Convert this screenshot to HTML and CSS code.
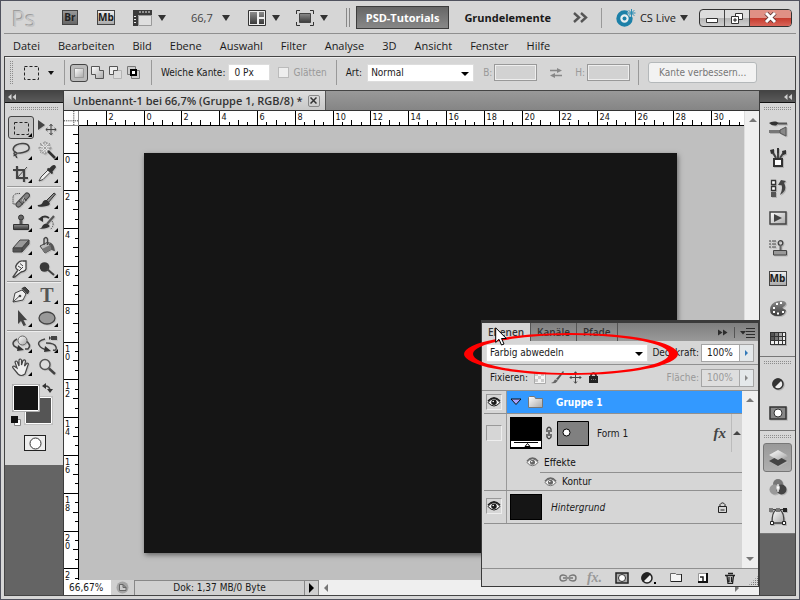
FILE: index.html
```html
<!DOCTYPE html>
<html lang="de">

  <head>
    <meta charset="UTF-8">
    <meta name="viewport" content="width=device-width, initial-scale=1.0">
    <title>Unbenannt-1 bei 66,7%</title>

    <link rel="stylesheet" href="styles.css">
  </head>

  <body>

    <svg class="defs" aria-hidden="true">
      <defs>
        <linearGradient id="steel" x1="0" y1="0" x2="0" y2="1">
          <stop offset="0" stop-color="#8c8c8c" />
          <stop offset="1" stop-color="#3a3a3a" />
        </linearGradient>
        <linearGradient id="pale" x1="0" y1="0" x2="1" y2="1">
          <stop offset="0" stop-color="#ffffff" />
          <stop offset="1" stop-color="#a8a8a8" />
        </linearGradient>
        <symbol id="eye" viewBox="0 0 14 10">
          <path d="M1 5.5Q4 1.5 7 1.5T13 5.5Q10 9 7 9T1 5.5Z" fill="#f4f4f4" stroke="currentColor" />
          <path d="M1 4Q4 .7 7 .7T13 4" fill="none" stroke="currentColor" stroke-width="1.4" />
          <circle cx="7" cy="5.3" r="2.7" fill="currentColor" />
          <circle cx="6.2" cy="4.5" r=".8" fill="#fff" />
        </symbol>
        <symbol id="collapse" viewBox="0 0 8 6">
          <path d="M3.5 0V6L0 3ZM8 0V6L4.5 3Z" fill="#d0d0d0" />
        </symbol>
      </defs>
    </svg>

    <div class="window">

      <header class="app-bar">
        <span class="logo">Ps</span>
        <button type="button" class="square-button bridge">Br</button>
        <button type="button" class="square-button mini">Mb</button>
        <button type="button" class="icon-button extras" aria-label="Extras anzeigen">
          <svg width="19" height="16" viewBox="0 0 19 16">
            <path d="M0 0H19V5H5V16H0Z" fill="#3b3b3b" />
            <path d="M7 1V3M10 1V3M13 1V3M16 1V3M1 6.5H3M1 9.5H3M1 12.5H3" stroke="#e8e8e8" />
            <path d="M5.5 5.5H18.5V15.5H5.5Z" fill="#dedede" stroke="#999" />
          </svg>
          <span class="arrow"></span>
        </button>
        <button type="button" class="icon-button zoom-level">66,7 <span class="arrow"></span></button>
        <button type="button" class="icon-button arrange" aria-label="Dokumente anordnen">
          <svg width="18" height="16" viewBox="0 0 18 16">
            <path d="M.5 .5H17.5V15.5H.5Z" fill="#eee" stroke="#333" />
            <path d="M2 2H9V14H2ZM11 2H16V7H11ZM11 9H16V14H11Z" fill="url(#steel)" />
          </svg>
          <span class="arrow"></span>
        </button>
        <button type="button" class="icon-button screen" aria-label="Bildschirmmodus">
          <svg width="18" height="16" viewBox="0 0 18 16">
            <path d="M.5 4V.5H4M14 .5H17.5V4M17.5 12V15.5H14M4 15.5H.5V12" fill="none" stroke="#333" />
            <path d="M3.5 3.5H14.5V12.5H3.5Z" fill="url(#steel)" stroke="#444" />
          </svg>
          <span class="arrow"></span>
        </button>
        <span class="double-line"></span>
        <button type="button" class="space active">PSD-Tutorials</button>
        <button type="button" class="space">Grundelemente</button>
        <button type="button" class="icon-button more" aria-label="Weitere Arbeitsbereiche">
          <svg width="15" height="11" viewBox="0 0 15 11">
            <path d="M1 1L6 5.5L1 10M8 1L13 5.5L8 10" fill="none" stroke="#555" stroke-width="2.4" />
          </svg>
        </button>
        <span class="line"></span>
        <button type="button" class="icon-button live">
          <svg width="20" height="18" viewBox="0 0 20 18">
            <circle cx="8.5" cy="9.5" r="6.2" fill="#e8eef0" stroke="#1c80a8" stroke-width="4" />
            <circle cx="8.5" cy="9.5" r="2" fill="#1c80a8" />
            <path d="M15.5 0V8M11.5 4H19.5M12.7 1.2L18.3 6.8M18.3 1.2L12.7 6.8" stroke="#d6d6d6" stroke-width="2.5" />
            <path d="M15.5 0V8M11.5 4H19.5M12.7 1.2L18.3 6.8M18.3 1.2L12.7 6.8" stroke="#2a8bb2" />
          </svg>
          CS Live <span class="arrow"></span>
        </button>
        <div class="window-buttons">
          <button type="button" aria-label="Minimieren">
            <svg width="12" height="13" viewBox="0 0 12 13"><path d="M.5 7.5H11.5V11.5H.5Z" fill="#fff" stroke="#333" /></svg>
          </button>
          <button type="button" aria-label="Verkleinern">
            <svg width="12" height="12" viewBox="0 0 12 12">
              <path d="M4.5 1.5H11.5V7.5H4.5Z" fill="#fff" stroke="#333" />
              <path d="M.5 4.5H7.5V11.5H.5Z" fill="#fff" stroke="#333" />
              <path d="M3 7H5V9H3Z" fill="#aaa" stroke="#333" />
            </svg>
          </button>
          <button type="button" class="close" aria-label="Schließen">
            <svg width="13" height="11" viewBox="0 0 13 11">
              <path d="M2 1L11 10M11 1L2 10" stroke="#5a3030" stroke-width="4.5" />
              <path d="M2 1L11 10M11 1L2 10" stroke="#fff" stroke-width="3" />
            </svg>
          </button>
        </div>
      </header>

      <nav class="menu">
        <a href="#">Datei</a>
        <a href="#">Bearbeiten</a>
        <a href="#">Bild</a>
        <a href="#">Ebene</a>
        <a href="#">Auswahl</a>
        <a href="#">Filter</a>
        <a href="#">Analyse</a>
        <a href="#">3D</a>
        <a href="#">Ansicht</a>
        <a href="#">Fenster</a>
        <a href="#">Hilfe</a>
      </nav>

      <div class="frame">

        <form class="options">
          <span class="grip-v"></span>
          <button type="button" class="icon-button current-tool" aria-label="Auswahlrechteck">
            <svg width="15" height="14" viewBox="0 0 15 14">
              <path d="M.5 .5H14.5V13.5H.5Z" fill="none" stroke="#222" stroke-dasharray="3 2" />
            </svg>
            <span class="arrow small"></span>
          </button>
          <span class="line"></span>
          <div class="modes">
            <button type="button" class="mode selected" aria-label="Neue Auswahl">
              <svg width="14" height="14" viewBox="0 0 14 14"><path d="M2.5 2.5H11.5V11.5H2.5Z" fill="url(#pale)" stroke="#999" /></svg>
            </button>
            <button type="button" class="mode" aria-label="Hinzufügen">
              <svg width="14" height="14" viewBox="0 0 14 14"><path d="M.5 .5H8.5V4.5H12.5V12.5H4.5V8.5H.5Z" fill="url(#pale)" stroke="#555" /></svg>
            </button>
            <button type="button" class="mode" aria-label="Subtrahieren">
              <svg width="14" height="14" viewBox="0 0 14 14">
                <path d="M4.5 4.5H12.5V12.5H4.5Z" fill="#ddd" stroke="#b4b4b4" />
                <path d="M.5 .5H8.5V4.5H4.5V8.5H.5Z" fill="#eee" stroke="#555" />
              </svg>
            </button>
            <button type="button" class="mode" aria-label="Schnittmenge">
              <svg width="14" height="14" viewBox="0 0 14 14">
                <path d="M.5 .5H8.5V8.5H.5ZM4.5 4.5H12.5V12.5H4.5Z" fill="#ccc" stroke="#777" />
                <path d="M4 4H9V9H4Z" fill="#fff" stroke="#000" stroke-width="2" />
              </svg>
            </button>
          </div>
          <span class="line"></span>
          <label for="feather">Weiche Kante:</label>
          <input type="text" class="field feather" id="feather" value="0 Px">
          <label class="check off"><input type="checkbox" disabled> Glätten</label>
          <span class="line"></span>
          <label for="style">Art:</label>
          <div class="select style-select">
            <select id="style">
              <option>Normal</option>
            </select>
          </div>
          <label for="width" class="off">B:</label>
          <input type="text" class="field size" id="width" disabled>
          <button type="button" class="icon-button swap" aria-label="Tauschen" disabled>
            <svg width="12" height="10" viewBox="0 0 12 10">
              <path d="M0 2.5H8M4 7.5H12" stroke="#888" stroke-width="1.5" />
              <path d="M7 0L12 2.5L7 5ZM5 5L0 7.5L5 10Z" fill="#888" />
            </svg>
          </button>
          <label for="height" class="off">H:</label>
          <input type="text" class="field size" id="height" disabled>
          <span class="line"></span>
          <button type="button" class="refine" disabled>Kante verbessern...</button>
        </form>

        <main class="workspace">

          <aside class="toolbox">
            <div class="dock-head"><svg width="8" height="6"><use href="#collapse" /></svg></div>
            <div class="tool-panel">
              <span class="grip"></span>
              <div class="tools">
                <button type="button" class="tool has-more selected" aria-label="Auswahlrechteck">
                  <svg width="20" height="20" viewBox="0 0 20 20"><path d="M3.5 4.5H17.5V16.5H3.5Z" fill="none" stroke="#222" stroke-dasharray="3 2" /></svg>
                </button>
                <button type="button" class="tool" aria-label="Verschieben">
                  <svg width="20" height="20" viewBox="0 0 20 20">
                    <path d="M1 2V12L8 7Z" fill="#444" />
                    <path d="M14 6.5V16.5M9 11.5H19M12.5 8L14 6.2L15.5 8M12.5 15L14 16.8L15.5 15M10.5 10L8.8 11.5L10.5 13M17.5 10L19.2 11.5L17.5 13" fill="none" stroke="#444" />
                  </svg>
                </button>
                <button type="button" class="tool has-more" aria-label="Lasso">
                  <svg width="20" height="20" viewBox="0 0 20 20">
                    <path d="M4 11Q1 9 3 6T11 2.5T18 6T12 11.5T4 11Q2 12.5 4 14T5.5 17M4 11Q7 12 5 13.5T2.5 14.5" fill="none" stroke="#444" stroke-width="1.5" />
                  </svg>
                </button>
                <button type="button" class="tool has-more" aria-label="Zauberstab">
                  <svg width="20" height="20" viewBox="0 0 20 20">
                    <circle cx="8" cy="7" r="5" fill="#e4e4e4" stroke="#999" stroke-width="2" stroke-dasharray="1.5 1.5" />
                    <path d="M8 0V14M1 7H15M3 2L13 12M13 2L3 12" stroke="#999" stroke-dasharray="2 1" />
                    <path d="M11 10L18 17" stroke="#333" stroke-width="2.5" />
                  </svg>
                </button>
                <button type="button" class="tool has-more" aria-label="Freistellen">
                  <svg width="20" height="20" viewBox="0 0 20 20">
                    <path d="M6 2V14H17M2 6H13V18" fill="none" stroke="#444" stroke-width="2.2" />
                    <path d="M6 14L16 3" stroke="#444" />
                  </svg>
                </button>
                <button type="button" class="tool has-more" aria-label="Pipette">
                  <svg width="20" height="20" viewBox="0 0 20 20">
                    <path d="M2 17L4 13L11 6L13 8.500L6 15.500Z" fill="#eee" stroke="#444" />
                    <path d="M10.5 4.5L15.5 9.500M12 6L15.5 2.500Q17.5 1 18 3L14.5 7.500Z" fill="#333" stroke="#333" stroke-width="1.8" />
                  </svg>
                </button>
              </div>
              <div class="tools">
                <button type="button" class="tool has-more" aria-label="Bereichsreparatur">
                  <svg width="20" height="20" viewBox="0 0 20 20">
                    <path d="M9 3.5Q2 3 2 8V14H5" fill="none" stroke="#222" stroke-dasharray="1 1" />
                    <path d="M7.500 14.500L16 5.500" stroke="#444" stroke-width="6" stroke-linecap="round" />
                    <path d="M7.500 14.500L16 5.500" stroke="#808080" stroke-width="4" stroke-linecap="round" />
                    <path d="M8 11L12 14.500M12 7L15.500 10.500" stroke="#444" />
                    <path d="M11 10H12M12 8H13M13 11H14" stroke="#eee" />
                  </svg>
                </button>
                <button type="button" class="tool has-more" aria-label="Pinsel">
                  <svg width="20" height="20" viewBox="0 0 20 20">
                    <path d="M9 11L17 3L18.5 4L11 13Z" fill="#888" stroke="#333" />
                    <path d="M1 15Q5 15 6 11.5Q9 8.5 12 12T7 16.5T1 15Z" fill="#333" />
                  </svg>
                </button>
                <button type="button" class="tool has-more" aria-label="Kopierstempel">
                  <svg width="20" height="20" viewBox="0 0 20 20">
                    <circle cx="10" cy="4.500" r="2.500" fill="#666" stroke="#333" />
                    <path d="M8.5 7H11.5V11H8.5Z" fill="#555" />
                    <path d="M2.5 11.5H17.5V16.5H2.5Z" fill="url(#steel)" stroke="#333" />
                  </svg>
                </button>
                <button type="button" class="tool has-more" aria-label="Protokollpinsel">
                  <svg width="20" height="20" viewBox="0 0 20 20">
                    <path d="M4 5Q8 2 12 5" fill="none" stroke="#333" stroke-width="1.800" />
                    <path d="M1 6L6 3V9Z" fill="#333" />
                    <path d="M10 11L17 3" stroke="#555" stroke-width="2.2" />
                    <path d="M2 16Q5 15 6 12Q9 9 12 12T2 16Z" fill="#333" />
                    <path d="M15 8Q18 12 13 17" fill="none" stroke="#444" stroke-dasharray="1.5 1" />
                  </svg>
                </button>
                <button type="button" class="tool has-more" aria-label="Radiergummi">
                  <svg width="20" height="20" viewBox="0 0 20 20">
                    <path d="M2 12L9 4H18L11 12Z" fill="#999" stroke="#444" />
                    <path d="M2 12H11V16H2ZM11 12L18 4V8L11 16Z" fill="#555" stroke="#444" />
                  </svg>
                </button>
                <button type="button" class="tool has-more" aria-label="Füllwerkzeug">
                  <svg width="20" height="20" viewBox="0 0 20 20">
                    <path d="M3 10L11 6L15 13L8 17Z" fill="#bbb" stroke="#444" />
                    <path d="M5 13L13 9L15 13L8 17Z" fill="#777" />
                    <path d="M7 9V3Q9 0 10.5 3V9" fill="none" stroke="#444" stroke-width="1.4" />
                    <path d="M12 6Q17 7 18 15Q14 15 14 11Z" fill="#555" />
                  </svg>
                </button>
                <button type="button" class="tool has-more" aria-label="Wischfinger">
                  <svg width="20" height="20" viewBox="0 0 20 20">
                    <path d="M2 18L7 11Q3 9 6 5T12 2H15V8Q16 12 10 13L5 17Q3 19 2 18Z" fill="#eee" stroke="#444" stroke-width="1.3" />
                    <path d="M7 7L10 9M9 4.5L12 7M8 12L12 8" stroke="#444" />
                  </svg>
                </button>
                <button type="button" class="tool has-more" aria-label="Abwedler">
                  <svg width="20" height="20" viewBox="0 0 20 20">
                    <circle cx="7.500" cy="8" r="4.800" fill="#3a3a3a" />
                    <path d="M10 10L17 16" stroke="#444" stroke-width="2" />
                  </svg>
                </button>
              </div>
              <div class="tools">
                <button type="button" class="tool has-more" aria-label="Zeichenstift">
                  <svg width="20" height="20" viewBox="0 0 20 20">
                    <path d="M2 17L4 8L11 5L15 9L12 15Z" fill="#eee" stroke="#444" />
                    <path d="M2 17L9 10.5" stroke="#444" />
                    <circle cx="9" cy="11" r="1.3" fill="#444" />
                    <path d="M11 3.5L16.5 9L18 6L14 2Z" fill="#444" stroke="#333" />
                  </svg>
                </button>
                <button type="button" class="tool has-more type" aria-label="Text">T</button>
                <button type="button" class="tool has-more" aria-label="Pfadauswahl">
                  <svg width="20" height="20" viewBox="0 0 20 20"><path d="M7 2V16L10 13L12.5 18L15 17L12.5 12H16Z" fill="#444" /></svg>
                </button>
                <button type="button" class="tool has-more" aria-label="Ellipse">
                  <svg width="20" height="20" viewBox="0 0 20 20"><ellipse cx="10" cy="10" rx="8" ry="6" fill="#999" stroke="#444" stroke-width="1.3" /></svg>
                </button>
              </div>
              <div class="tools">
                <button type="button" class="tool has-more" aria-label="3D-Objekt drehen">
                  <svg width="20" height="20" viewBox="0 0 20 20">
                    <path d="M6 5Q0 8 3 12L8 15M15 7Q21 11 17 15L14 15" fill="none" stroke="#444" stroke-width="1.6" />
                    <path d="M7 11L13 16L6 17Z" fill="#333" />
                    <circle cx="11.5" cy="6.5" r="4.5" fill="url(#pale)" stroke="#666" />
                  </svg>
                </button>
                <button type="button" class="tool has-more" aria-label="3D-Kamera drehen">
                  <svg width="20" height="20" viewBox="0 0 20 20">
                    <path d="M8 5Q0 7 2 11T11 16M9 9Q18 9 19 13T16 16" fill="none" stroke="#444" stroke-width="1.4" />
                    <path d="M8 12L14 17L7 18ZM12 2L14 4L12 6Z" fill="#333" />
                    <path d="M14 2H20V6H14Z" fill="#444" />
                  </svg>
                </button>
                <button type="button" class="tool has-more" aria-label="Hand">
                  <svg width="20" height="20" viewBox="0 0 20 20">
                    <path d="M7 17L2 11Q1 9 3 9L6 11L4 5Q5 3 6.5 5L8 9V3Q9 1 10.5 3V8L12 3.5Q14 2 14.5 4L13.5 9L16 6Q18 6 17 8L15 14L14 17Q10 20 7 17Z" fill="#eee" stroke="#444" stroke-width="1.2" />
                  </svg>
                </button>
                <button type="button" class="tool" aria-label="Zoom">
                  <svg width="20" height="20" viewBox="0 0 20 20">
                    <circle cx="8" cy="7.5" r="5" fill="#ddd" stroke="#555" stroke-width="1.5" />
                    <path d="M12 11.5L18 17" stroke="#444" stroke-width="2.4" />
                  </svg>
                </button>
              </div>
              <svg class="swatches" width="44" height="44" viewBox="0 0 44 44">
                <path d="M13.5 13.5H41.5V41.5H13.5Z" fill="#555" stroke="#c0c0c0" />
                <path d="M14.5 14.5H40.5V40.5H14.5Z" fill="#555" stroke="#fff" />
                <path d="M1.5 1.5H28.5V28.5H1.5Z" fill="#151515" stroke="#b0b0b0" />
                <path d="M2.5 2.5H27.5V27.5H2.5Z" fill="#151515" stroke="#fff" />
                <path d="M34 3Q39 3 39 8" fill="none" stroke="#444" stroke-width="1.5" />
                <path d="M35 0V6L31 3ZM36 6H42L39 10Z" fill="#333" />
                <path d="M3.5 36.5H9.5V42.5H3.5Z" fill="#fff" stroke="#888" />
                <path d="M0 33H7V40H0Z" fill="#111" />
              </svg>
              <button type="button" class="quick-mask" aria-label="Maskierungsmodus">
                <svg width="13" height="13" viewBox="0 0 13 13"><circle cx="6.5" cy="6.5" r="5.5" fill="#fff" stroke="#333" /></svg>
              </button>
            </div>
          </aside>

          <section class="document">
            <div class="tab-bar">
              <div class="doc-tab">
                Unbenannt-1 bei 66,7% (Gruppe 1, RGB/8) *
                <button type="button" aria-label="Dokument schließen">
                  <svg width="7" height="7" viewBox="0 0 7 7"><path d="M.5 .5L6.5 6.5M6.5 .5L.5 6.5" stroke="#333" stroke-width="1.5" /></svg>
                </button>
              </div>
            </div>
            <div class="view">
              <svg class="ruler-corner" viewBox="0 0 15 15">
                <path d="M10.5 0V15M0 10.5H15" stroke="#222" stroke-dasharray="1 1" />
              </svg>
              <svg class="ruler-h" id="ruler-h"></svg>
              <svg class="ruler-v" id="ruler-v"></svg>
              <div class="canvas"><div class="image"></div></div>
              <div class="scroll-v"><span class="up"></span></div>
            </div>
            <div class="status">
              <input type="text" class="status-zoom" value="66,67%" aria-label="Zoom">
              <button type="button" class="status-icon" aria-label="Version">
                <svg width="13" height="13" viewBox="0 0 13 13">
                  <circle cx="6.5" cy="6.5" r="6" fill="#a4a4a4" />
                  <path d="M3.5 9.5V3.5H7L10 6.5V9.5ZM7 3.5V6.5H10" fill="#ccc" stroke="#666" />
                </svg>
              </button>
              <span class="doc-size">Dok: 1,37 MB/0 Byte</span>
              <button type="button" class="status-more" aria-label="Statusanzeige"><span></span></button>
              <div class="scroll-h"><span class="left"></span><span class="right"></span></div>
            </div>
          </section>

          <aside class="dock">
            <div class="dock-head"><svg width="8" height="6"><use href="#collapse" /></svg></div>
            <div class="dock-group tall">
              <span class="grip"></span>
              <button type="button" aria-label="Pinsel">
                <svg width="20" height="20" viewBox="0 0 20 20">
                  <path d="M1 5Q3 3 8 3.5L11 5L8 7.5Q4 8 1 5Z" fill="#333" />
                  <path d="M10 5.5H19" stroke="#555" stroke-width="2" />
                  <path d="M1 13.5H12" stroke="#777" stroke-width="3" />
                  <path d="M12 12L18 9V18L12 15Z" fill="#888" stroke="#555" />
                </svg>
              </button>
              <button type="button" aria-label="Kopierquelle">
                <svg width="20" height="20" viewBox="0 0 20 20">
                  <path d="M8 10L4 3M10 10V2M12 10L16 4" stroke="#444" stroke-width="2" />
                  <path d="M2 2L6 1V5L3 6ZM14 3L18 2L18 6L15 7ZM9 0H11V5H9Z" fill="#333" />
                  <path d="M6 11H14V18H6Z" fill="#fff" stroke="#333" stroke-width="2" />
                </svg>
              </button>
              <button type="button" aria-label="Protokoll">
                <svg width="20" height="20" viewBox="0 0 20 20">
                  <path d="M3.5 2.5H7.5V6.5H3.5ZM3.5 8.5H7.5V12.5H3.5Z" fill="#fff" stroke="#333" stroke-width="1.3" />
                  <path d="M3 14H8V19H3Z" fill="#555" />
                  <path d="M10 7L13 2L18 3L16 5Q20 12 12 17Q15 11 13.500 7Z" fill="#444" />
                </svg>
              </button>
              <button type="button" aria-label="Aktionen">
                <svg width="20" height="20" viewBox="0 0 20 20">
                  <path d="M2 4H18V16H2Z" fill="url(#pale)" stroke="#444" stroke-width="1.5" />
                  <path d="M6 6V14L14 10Z" fill="#444" />
                </svg>
              </button>
              <button type="button" aria-label="Werkzeugvorgaben">
                <svg width="20" height="20" viewBox="0 0 20 20">
                  <path d="M1 3H3M4 3H8M1 6H3M4 6H8M1 9H3M4 9H8" stroke="#444" />
                  <circle cx="12.5" cy="5" r="2.3" fill="none" stroke="#444" stroke-width="1.3" />
                  <path d="M11.5 7H13.5V12H11.5Z" fill="#666" />
                  <path d="M5.5 12.5H18.5V17H5.5Z" fill="#999" stroke="#444" />
                </svg>
              </button>
              <button type="button" aria-label="Mini Bridge"><span class="square-button mini">Mb</span></button>
              <button type="button" aria-label="Farbe">
                <svg width="20" height="20" viewBox="0 0 20 20">
                  <path d="M2 12Q2 5 10 3Q18 2 18 6Q17 8 15 9T18 12Q17 18 10 18Q2 18 2 12Z" fill="url(#steel)" />
                  <path d="M5 10H7M8 6H10M12 5H14M5 14H7M9 15.5H11M14 14H16" stroke="#fff" stroke-width="2.2" />
                </svg>
              </button>
              <button type="button" aria-label="Farbfelder">
                <svg width="20" height="20" viewBox="0 0 20 20">
                  <path d="M2 4H18V17H2Z" fill="#333" />
                  <path d="M3 5H6V8H3ZM3 9H6V12H3Z" fill="#555" />
                  <path d="M7 5H10V8H7ZM7 9H10V12H7Z" fill="#777" />
                  <path d="M11 5H14V8H11ZM11 9H14V12H11Z" fill="#aaa" />
                  <path d="M15 5H17V8H15ZM15 9H17V12H15ZM3 13H6V16H3ZM7 13H10V16H7ZM11 13H14V16H11ZM15 13H17V16H15Z" fill="#eee" />
                </svg>
              </button>
            </div>
            <div class="dock-group">
              <span class="grip"></span>
              <button type="button" aria-label="Korrekturen">
                <svg width="20" height="20" viewBox="0 0 20 20">
                  <circle cx="10" cy="10" r="5" fill="#eee" stroke="#333" stroke-width="1.5" />
                  <path d="M6 14A5.5 5.5 0 0 1 14 6Z" fill="#333" />
                </svg>
              </button>
              <button type="button" aria-label="Masken">
                <svg width="20" height="20" viewBox="0 0 20 20">
                  <path d="M2 4H18V16H2Z" fill="#888" stroke="#333" stroke-width="1.5" />
                  <circle cx="10" cy="10" r="4" fill="#fff" stroke="#333" />
                </svg>
              </button>
            </div>
            <div class="dock-group">
              <span class="grip"></span>
              <button type="button" class="pressed" aria-label="Ebenen">
                <svg width="20" height="20" viewBox="0 0 20 20">
                  <path d="M1 13L10 8L19 13L10 18Z" fill="#444" />
                  <path d="M1 7L10 2L19 7L10 12Z" fill="url(#pale)" />
                </svg>
              </button>
              <button type="button" aria-label="Kanäle">
                <svg width="20" height="20" viewBox="0 0 20 20">
                  <circle cx="10" cy="7" r="5" fill="#777" />
                  <circle cx="6.5" cy="12.5" r="5" fill="#999" />
                  <circle cx="13.5" cy="12.5" r="5" fill="#444" />
                  <path d="M10 7Q13 10 10 15Q7 10 10 7Z" fill="#fff" stroke="#ccc" />
                </svg>
              </button>
              <button type="button" aria-label="Pfade">
                <svg width="20" height="20" viewBox="0 0 20 20">
                  <path d="M4 17Q4 6 8 4H12Q16 6 16 17Z" fill="url(#pale)" stroke="#444" stroke-width="1.3" />
                  <path d="M2 3.5H18" stroke="#444" />
                  <path d="M1 2H5V6H1ZM8 2H12V6H8Z" fill="#777" />
                  <path d="M15 2H19V6H15Z" fill="#222" />
                  <path d="M2.5 15.5H5.5V18.5H2.5ZM14.5 15.5H17.5V18.5H14.5Z" fill="#fff" stroke="#222" />
                </svg>
              </button>
            </div>
          </aside>

        </main>
      </div>

      <section class="layers">
        <div class="panel-tabs">
          <button type="button" class="panel-tab current">Ebenen</button>
          <button type="button" class="panel-tab">Kanäle</button>
          <button type="button" class="panel-tab">Pfade</button>
          <svg class="panel-icons" width="38" height="11" viewBox="0 0 38 11">
            <path d="M0 2.5V8.5L4.5 5.5ZM5 2.5V8.5L9.5 5.5Z" fill="#2c2c2c" />
            <path d="M16.5 0V11" stroke="#555" />
            <path d="M22 4H28L25 7.5Z" fill="#2c2c2c" />
            <path d="M28 1.5H37M28 4.5H37M28 7.5H37M28 10.5H37" stroke="#2c2c2c" />
          </svg>
        </div>
        <div class="panel-row">
          <div class="select blend">
            <select aria-label="Füllmethode">
              <option>Farbig abwedeln</option>
            </select>
          </div>
          <label for="opacity">Deckkraft:</label>
          <div class="percent">
            <input type="text" id="opacity" value="100%">
            <button type="button" aria-label="Deckkraft ändern"><span></span></button>
          </div>
        </div>
        <div class="panel-row lock-row">
          <span>Fixieren:</span>
          <svg class="locks" width="66" height="13" viewBox="0 0 66 13">
            <path d="M.5 1.5H11.5V12.5H.5Z" fill="#f4f4f4" stroke="#aaa" />
            <path d="M1 2H4V5H1ZM7 2H10V5H7ZM4 5H7V8H4ZM1 8H4V11H1ZM7 8H10V11H7Z" fill="#ccc" />
            <path d="M22 8L29 0L30 1L24 9Z" fill="#555" />
            <path d="M17 12Q20 11 21 8.5L24 9.5Q22 13 17 12Z" fill="#666" />
            <path d="M41.5 1V12M36 6.5H47M40 2.5L41.5 .7L43 2.5M40 10.5L41.5 12.3L43 10.5M37.5 5L36 6.5L37.5 8M45.5 5L47 6.5L45.5 8" fill="none" stroke="#444" />
            <path d="M57 6V4Q59.5 0 62 4V6" fill="none" stroke="#222" stroke-width="1.6" />
            <path d="M55 5H64V12H55Z" fill="#222" />
            <path d="M57 8.5H62" stroke="#777" stroke-dasharray="1 1" />
          </svg>
          <label for="fill" class="off">Fläche:</label>
          <div class="percent off">
            <input type="text" id="fill" value="100%" disabled>
            <button type="button" aria-label="Fläche ändern" disabled><span></span></button>
          </div>
        </div>
        <div class="layer-area">
          <ul class="layer-list">
            <li class="layer group">
              <div class="visibility"><button type="button" class="eye-box" aria-label="Sichtbarkeit"><svg width="14" height="10"><use href="#eye" /></svg></button></div>
              <div class="layer-body">
                <svg class="twirl" width="12" height="8" viewBox="0 0 12 8"><path d="M1 1H11L6 6.5Z" fill="#a9a4ff" stroke="#111" /></svg>
                <svg class="folder" width="16" height="12" viewBox="0 0 16 12"><path d="M.5 1.5L1.5 .5H6.5L7.5 2.5H14.5V11.5H.5Z" fill="url(#pale)" stroke="#777" /></svg>
                <span>Gruppe 1</span>
              </div>
            </li>
            <li class="layer shape">
              <div class="visibility"><button type="button" class="eye-box" aria-label="Sichtbarkeit"></button></div>
              <div class="layer-content">
                <div class="layer-body">
                  <svg class="thumb" width="32" height="32" viewBox="0 0 32 32">
                    <path d="M0 0H32V32H0Z" fill="#000" />
                    <path d="M1 24H31V30H1Z" fill="#fff" />
                    <path d="M4 25.5H28M15 29.5L17.5 26.5L20 29.5Z" fill="none" stroke="#000" />
                  </svg>
                  <svg class="chain" width="8" height="14" viewBox="0 0 8 14">
                    <path d="M2 6V3Q4 -.5 6 3V6M2 8V11Q4 14.5 6 11V8M4 4V10" fill="none" stroke="#444" stroke-width="1.4" />
                  </svg>
                  <svg class="mask" width="32" height="25" viewBox="0 0 32 25">
                    <path d="M.5 .5H31.5V24.5H.5Z" fill="#808080" stroke="#000" />
                    <circle cx="9.5" cy="11.5" r="3.5" fill="#fff" stroke="#000" />
                  </svg>
                  <span>Form 1</span>
                  <i class="fx">fx</i>
                  <button type="button" class="fold" aria-label="Effekte einklappen"><span></span></button>
                </div>
                <div class="effect"><svg width="13" height="10"><use href="#eye" /></svg> Effekte</div>
                <div class="effect sub"><svg width="13" height="10"><use href="#eye" /></svg> Kontur</div>
              </div>
            </li>
            <li class="layer background">
              <div class="visibility"><button type="button" class="eye-box" aria-label="Sichtbarkeit"><svg width="14" height="10"><use href="#eye" /></svg></button></div>
              <div class="layer-body">
                <span class="thumb-dark"></span>
                <em>Hintergrund</em>
                <svg class="lock" width="9" height="11" viewBox="0 0 9 11">
                  <path d="M2 5V2.5Q4.5 -.8 7 2.5V5M.5 4.5H8.5V10.5H.5ZM2.5 8H6.5" fill="none" stroke="#222" />
                </svg>
              </div>
            </li>
          </ul>
          <div class="layer-scroll"><span class="up"></span><span class="down"></span></div>
        </div>
        <div class="panel-foot">
          <button type="button" class="off" aria-label="Ebenen verbinden">
            <svg width="18" height="8" viewBox="0 0 18 8"><path d="M8 2.5Q6 1 4 1Q1 1 1 4T4 7Q6 7 8 5.5M10 2.5Q12 1 14 1Q17 1 17 4T14 7Q12 7 10 5.5M4 4H14" fill="none" stroke="#777" stroke-width="1.4" /></svg>
          </button>
          <button type="button" class="off" aria-label="Ebenenstil"><i class="fx">fx.</i></button>
          <button type="button" aria-label="Ebenenmaske">
            <svg width="14" height="12" viewBox="0 0 14 12"><path d="M1 1H13V11H1Z" fill="#aaa" stroke="#222" stroke-width="1.5" /><circle cx="7" cy="6" r="3.5" fill="#fff" stroke="#333" /></svg>
          </button>
          <button type="button" aria-label="Einstellungsebene">
            <svg width="16" height="12" viewBox="0 0 16 12"><circle cx="6" cy="6" r="5" fill="#eee" stroke="#222" stroke-width="1.5" /><path d="M2 10A5.5 5.5 0 0 1 10 2Z" fill="#222" /><path d="M13 10H15V12H13Z" fill="#000" /></svg>
          </button>
          <button type="button" aria-label="Neue Gruppe">
            <svg width="12" height="9" viewBox="0 0 12 9"><path d="M.5 .5H5.5L6.5 1.5H11.5V8.5H.5Z" fill="#f4f4f4" stroke="#666" /><path d="M11.5 1V8.5H1" fill="none" stroke="#222" /></svg>
          </button>
          <button type="button" aria-label="Neue Ebene">
            <svg width="10" height="10" viewBox="0 0 10 10"><path d="M.5 .5H9.5V9.500H.5Z" fill="#fff" stroke="#999" /><path d="M9 0V9H0" fill="none" stroke="#111" stroke-width="2" /><path d="M2 4H5V8" fill="none" stroke="#222" stroke-width="1.5" /></svg>
          </button>
          <button type="button" aria-label="Löschen">
            <svg width="10" height="12" viewBox="0 0 10 12"><path d="M2 4L3 11.5H7.5L8.5 4M4 5V10M6.5 5V10" fill="none" stroke="#222" stroke-width="1.3" /><path d="M0 3.5H10M3 1.5H8" stroke="#222" stroke-width="1.5" /></svg>
          </button>
          <span class="resize"></span>
        </div>
        <svg class="marker" viewBox="0 0 214 42">
          <path fill-rule="evenodd" d="M0 21A107 21 0 0 1 214 21A107 21 0 0 1 0 21ZM9 21A98 19 0 0 0 205 21A98 19 0 0 0 9 21Z" fill="#f00" />
        </svg>
        <svg class="cursor" width="12" height="19" viewBox="0 0 12 19">
          <path d="M.7 .8V15.5L4 12.3L6.5 18L9 17L6.5 11.5H11.3Z" fill="#fff" stroke="#000" />
        </svg>
      </section>

    </div>

    <script src="rulers.js"></script>
  </body>

</html>
```

FILE: styles.css
```css
* {
  margin: 0;
  padding: 0;
  box-sizing: border-box;
}

body {
  height: 100vh;
  overflow: hidden;
  font-family: "Open Sans", "Noto Sans", sans-serif;
  font-size: 11px;
  color: #1a1a1a;
}

button,
input,
select {
  font: inherit;
  color: inherit;
}

button {
  background: none;
  border: none;
}

svg {
  display: block;
  flex: none;
}

a {
  color: inherit;
  text-decoration: none;
}

.defs {
  position: absolute;
  width: 0;
  height: 0;
}

.window {
  position: relative;
  height: 100vh;
  display: flex;
  flex-direction: column;
  padding: 1px 3px 3px;
  border: 1px solid #50525e;
  background: #d6d6d6;
}

/* application bar */

.app-bar {
  display: flex;
  align-items: center;
  height: 32px;
  padding: 0 4px 0 8px;
  border-bottom: 1px solid #8f8f8f;
  white-space: nowrap;
}

.logo {
  width: 50px;
  font-size: 22px;
  line-height: 28px;
  color: #c6c6c6;
  text-shadow: -1px -1px 0 #9c9c9c;
}

.square-button {
  height: 15px;
  border: 1px solid #444;
  font-size: 10px;
  font-weight: bold;
  line-height: 13px;
  text-align: center;
}

.bridge {
  width: 16px;
  margin-right: 19px;
  background: linear-gradient(#999, #666);
  color: #222;
}

.mini {
  width: 18px;
  background: linear-gradient(#eee, #aaa);
}

.icon-button {
  display: flex;
  align-items: center;
  gap: 6px;
}

.arrow {
  border: 4px solid transparent;
  border-top: 6px solid #333;
  border-bottom: none;
}

.arrow.small {
  border-width: 4px 3px 0;
  border-top-color: #111;
}

.extras {
  margin-left: 18px;
}

.zoom-level {
  margin-left: 25px;
  gap: 9px;
  font-size: 11px;
  color: #444;
}

.arrange {
  margin-left: 18px;
}

.screen {
  margin-left: 16px;
}

.double-line {
  width: 4px;
  height: 19px;
  margin: 0 6px 0 18px;
  border: solid #888;
  border-width: 0 1px;
}

.line {
  width: 1px;
  background: #999;
}

.app-bar .line {
  height: 20px;
}

.space {
  height: 23px;
  padding: 0 9px;
  border: 1px solid transparent;
  font-weight: bold;
}

.space.active {
  margin-right: 5px;
  border-color: #3c3c3c;
  background: linear-gradient(#666, #888);
  color: #fff;
}

.more {
  margin: 0 13px 0 12px;
}

.live {
  margin-left: 14px;
  gap: 4px;
}

.window-buttons {
  flex: none;
  display: flex;
  height: 18px;
  margin-left: auto;
  border: 1px solid #333;
  border-radius: 4px;
  overflow: hidden;
  background: linear-gradient(#ddd 50%, #b4b4b4 50%, #d0d0d0);
}

.window-buttons button {
  width: 25px;
  display: grid;
  place-items: center;
  border-right: 1px solid #444;
}

.window-buttons .close {
  width: 41px;
  border: none;
  background: linear-gradient(#e09085 50%, #c53a2c 50%, #d9665a);
}

/* menu */

.menu {
  display: flex;
  align-items: center;
  gap: 18px;
  height: 22px;
  padding-left: 9px;
  white-space: nowrap;
}

.frame {
  flex: 1;
  min-height: 0;
  display: flex;
  flex-direction: column;
  border: 1px solid #444;
}

/* options bar */

.options {
  display: flex;
  align-items: center;
  height: 33px;
  padding: 0 4px 3px;
  border-top: 1px solid #eee;
  font-family: "DejaVu Sans Condensed", "DejaVu Sans", sans-serif;
  font-size: 10px;
  white-space: nowrap;
}

.options .line {
  height: 25px;
}

.off {
  color: #999;
}

.grip,
.grip-v {
  background:
    repeating-linear-gradient(90deg, #d6d6d6 0 1px, transparent 1px 2px),
    repeating-linear-gradient(#8c8c8c 0 1px, #d6d6d6 1px 2px);
}

.grip-v {
  width: 4px;
  height: 24px;
}

.current-tool {
  margin: 0 10px 0 11px;
  gap: 9px;
}

.modes {
  display: flex;
  gap: 2px;
  margin: 0 9px 0 5px;
}

.mode {
  width: 16px;
  height: 18px;
  display: grid;
  place-items: center;
}

.mode.selected {
  width: 18px;
  border: 1px solid #444;
  border-radius: 3px;
  background: #bbb;
}

.options label[for="feather"] {
  margin-left: 9px;
}

.field {
  height: 17px;
  border: 1px solid #ddd;
  background: #fff;
}

.field:disabled {
  border: 1px solid #999;
  outline: 1px solid #eee;
  outline-offset: -2px;
  background: #d2d2d2;
}

.feather {
  width: 42px;
  margin: 0 8px 0 3px;
  padding-left: 5px;
}

.check {
  display: flex;
  align-items: center;
  gap: 4px;
  margin-right: 9px;
}

.check input {
  appearance: none;
  width: 11px;
  height: 11px;
  border: 1px solid #bbb;
  background: #eee;
}

.options label[for="style"] {
  margin: 0 5px 0 9px;
}

.select {
  position: relative;
  height: 18px;
  border: 1px solid #ddd;
  background: #fff;
}

.select select {
  appearance: none;
  width: 100%;
  height: 16px;
  padding: 0 3px;
  border: none;
  background: transparent;
}

.select::after {
  content: "";
  position: absolute;
  right: 4px;
  top: 7px;
  border: 4px solid transparent;
  border-top-color: #000;
  border-bottom: none;
  pointer-events: none;
}

.style-select {
  width: 107px;
  margin-right: 9px;
}

.size {
  width: 43px;
  margin-left: 2px;
}

.swap {
  margin: 0 13px;
}

.size + .line {
  margin: 0 9px 0 8px;
}

.refine {
  width: 109px;
  height: 21px;
  border: 1px solid #b4b8ba;
  border-radius: 3px;
  background: #f2f2f2;
  color: #777;
}

/* workspace */

.workspace {
  flex: 1;
  min-height: 0;
  display: flex;
  border-top: 1px solid #444;
}

.toolbox {
  width: 59px;
  border-right: 1px solid #3c3c3c;
  background: #646464;
}

.dock-head {
  display: flex;
  align-items: center;
  height: 12px;
  padding: 0 3px;
  border-bottom: 1px solid #111;
  background: linear-gradient(#444, #5a5a5a);
}

.grip {
  display: block;
  height: 4px;
}

.tool-panel {
  height: 362px;
  padding: 4px 2px 0;
  background: #d6d6d6;
}

.tool-panel .grip {
  margin: 0 3px 5px;
}

.tools {
  display: grid;
  grid-template-columns: 26px 26px;
  grid-auto-rows: 23px;
  padding: 0 0 1px 1px;
}

.tools + .tools {
  padding-top: 1px;
  border-top: 1px solid #999;
  box-shadow: inset 0 1px #eee;
}

.tool {
  position: relative;
  display: grid;
  place-items: center;
  border: 1px solid transparent;
}

.tool svg {
  filter: drop-shadow(1px 1px 0 #c4c4c4);
}

.tool.selected {
  border: 1px solid #444;
  border-radius: 3px;
  background: #c4c4c4;
}

.tool.has-more::after {
  content: "";
  position: absolute;
  right: 1px;
  bottom: 1px;
  border: 2px solid #000;
  border-top-color: transparent;
  border-left-color: transparent;
}

.type {
  font-family: "Liberation Serif", serif;
  font-size: 20px;
  font-weight: bold;
  line-height: 20px;
  color: #555;
}

.swatches {
  margin: 4px 0 0 4px;
}

.quick-mask {
  display: grid;
  place-items: center;
  width: 22px;
  height: 16px;
  margin: 8px 0 0 17px;
  border: 1px solid #222;
  background: #eee;
}

/* document */

.document {
  flex: 1;
  min-width: 0;
  display: flex;
  flex-direction: column;
}

.tab-bar {
  display: flex;
  height: 20px;
  border-bottom: 1px solid #333;
  background: linear-gradient(#999, #858585);
}

.doc-tab {
  display: flex;
  align-items: center;
  gap: 5px;
  padding: 0 5px 0 9px;
  border-right: 1px solid #555;
  background: linear-gradient(#dedede, #c8c8c8);
  font-weight: 600;
  color: #333;
  white-space: nowrap;
}

.doc-tab button {
  display: grid;
  place-items: center;
  width: 12px;
  height: 12px;
  border: 1px solid #888;
  border-radius: 2px;
}

.view {
  flex: 1;
  min-height: 0;
  display: grid;
  grid-template-columns: 15px 1fr 15px;
  grid-template-rows: 15px 1fr;
}

.view > svg {
  width: 100%;
  height: 100%;
  overflow: hidden;
  background: #fff;
}

.view > .ruler-corner {
  border: solid #888;
  border-width: 0 1px 1px 0;
}

.view > .ruler-h {
  border-bottom: 1px solid #000;
}

.view > .ruler-v {
  grid-row: 2;
  grid-column: 1;
  min-height: 0;
  border-right: 1px solid #000;
}

.ruler-h text,
.ruler-v text {
  font-family: "DejaVu Sans Condensed", "DejaVu Sans", sans-serif;
  font-size: 9px;
  fill: #111;
}

.canvas {
  grid-row: 2;
  grid-column: 2;
  min-height: 0;
  padding: 27px 66px 27px 65px;
  background: #bfbfbf;
}

.image {
  max-height: 100%;
  aspect-ratio: 4 / 3;
  background: #151515;
  box-shadow: 1px 2px 5px #666;
}

.scroll-v {
  grid-row: 1 / 3;
  grid-column: 3;
  padding: 7px 4px;
  border-left: 1px solid #ddd;
  background: #efefef;
}

.up,
.down {
  display: block;
  border: 4px solid transparent;
}

.up {
  border-top: none;
  border-bottom-color: #777;
}

.down {
  border-bottom: none;
  border-top-color: #777;
}

.status {
  display: flex;
  height: 15px;
  background: #d0d0d0;
  font-family: "DejaVu Sans Condensed", "DejaVu Sans", sans-serif;
  font-size: 10px;
  white-space: nowrap;
}

.status-zoom {
  width: 47px;
  padding-left: 5px;
  border: none;
  background: #fff;
}

.status-icon {
  padding: 1px 5px;
}

.doc-size {
  width: 171px;
  border: solid #888;
  border-width: 1px 1px 0;
  line-height: 14px;
  text-align: center;
}

.status-more {
  width: 14px;
  display: grid;
  place-items: center;
  border: solid #888;
  border-width: 1px 1px 0 0;
}

.status-more span {
  border: 5px solid transparent;
  border-left-color: #000;
  border-right: none;
}

.scroll-h {
  flex: 1;
  display: flex;
  align-items: center;
  justify-content: space-between;
  padding: 0 20px 0 5px;
  background: #efefef;
}

.left,
.right {
  border: 4px solid transparent;
}

.left {
  border-left: none;
  border-right-color: #777;
}

.right {
  border-right: none;
  border-left-color: #777;
}

/* icon dock */

.dock {
  width: 36px;
  border-left: 1px solid #3c3c3c;
  background: #646464;
}

.dock .dock-head {
  justify-content: flex-end;
}

.dock-group {
  padding: 4px 3px 3px;
  border-bottom: 1px solid #777;
  background: #d6d6d6;
}

.dock-group button {
  width: 29px;
  height: 29px;
  display: grid;
  place-items: center;
}

.dock-group.tall button {
  height: 30px;
}

.dock-group .grip {
  margin-bottom: 4px;
}

.dock-group.tall .grip {
  margin-bottom: 2px;
}

.dock-group svg {
  filter: drop-shadow(1px 1px 0 #b4b4b4);
}

.dock-group .pressed {
  border: 1px solid #777;
  border-radius: 3px;
  background: linear-gradient(#999, #b0b0b0);
}

/* layers panel floats over the document */

.layers {
  position: absolute;
  right: 40px;
  bottom: 12px;
  width: 278px;
  border: 1px solid #3a3a3a;
  border-top-width: 3px;
  background: #d6d6d6;
  font-family: "DejaVu Sans Condensed", "DejaVu Sans", sans-serif;
  font-size: 10px;
  white-space: nowrap;
}

.panel-tabs {
  display: flex;
  align-items: center;
  height: 18px;
  background: linear-gradient(#7e7e7e, #999);
}

.panel-tab {
  height: 18px;
  padding: 0 6px;
  border-right: 1px solid #555;
  color: #333;
  font-family: "Open Sans", sans-serif;
  font-weight: 600;
}

.panel-tab.current {
  background: #d6d6d6;
}

.panel-icons {
  margin: 0 2px 0 auto;
}

.panel-row {
  display: flex;
  align-items: center;
  height: 24px;
  padding: 0 4px;
  border-bottom: 1px solid #909090;
}

.panel-row.lock-row {
  height: 26px;
  padding-left: 8px;
}

.blend {
  flex: 1;
  margin-right: 4px;
}

.percent {
  display: flex;
  width: 53px;
  height: 18px;
  margin-left: 2px;
  border: 1px solid #a4a4a4;
  background: #fff;
}

.percent input {
  width: 37px;
  padding-left: 5px;
  border: none;
  background: transparent;
}

.percent button {
  flex: 1;
  display: grid;
  place-items: center;
  border-left: 1px solid #aaa;
  background: #e4e8ea;
}

.percent button span {
  border: 3px solid transparent;
  border-left-color: #3279b8;
  border-right: none;
}

.percent.off {
  background: #dedede;
}

.percent.off button span {
  border-left-color: #888;
}

.locks {
  margin: 0 auto 0 6px;
}

.layer-area {
  display: flex;
  height: 177px;
  padding-left: 2px;
}

.layer-list {
  flex: 1;
  list-style: none;
}

.layer {
  display: flex;
  border-bottom: 1px solid #909090;
}

.visibility {
  width: 23px;
  padding: 3px 2px;
  border-right: 1px solid #999;
}

.eye-box {
  display: grid;
  place-items: center;
  width: 16px;
  height: 16px;
  border: 1px solid;
  border-color: #999 #eee #eee #999;
}

.layer-body {
  flex: 1;
  display: flex;
  align-items: center;
}

.group .layer-body {
  height: 22px;
  padding-left: 3px;
  background: #3399ff;
  color: #fff;
  font-weight: bold;
}

.folder {
  margin: 0 12px 0 6px;
}

.layer-content {
  flex: 1;
}

.shape .layer-body {
  height: 38px;
  padding-left: 3px;
}

.shape .visibility {
  padding-top: 11px;
}

.chain {
  margin: 0 4px 0 3px;
}

.mask {
  margin-right: 8px;
}

.fx {
  font-family: "Liberation Serif", serif;
  font-size: 15px;
  font-weight: bold;
}

.shape .fx {
  margin-left: auto;
  color: #444;
}

.fold {
  display: grid;
  place-items: center;
  width: 11px;
  height: 38px;
  margin-left: 5px;
  border-left: 1px solid #bbb;
}

.fold span {
  border: 4px solid transparent;
  border-bottom-color: #444;
  border-top: none;
}

.effect {
  display: flex;
  align-items: center;
  gap: 5px;
  height: 20px;
  padding-left: 19px;
  color: #111;
}

.effect svg {
  color: #666;
}

.effect.sub {
  height: 18px;
  margin-left: 33px;
  padding-left: 4px;
  border-top: 1px solid #909090;
}

.background .layer-body {
  height: 32px;
  padding: 0 15px 0 3px;
}

.background .visibility {
  padding-top: 7px;
}

.thumb-dark {
  width: 32px;
  height: 26px;
  margin-right: 9px;
  border: 1px solid #000;
  background: #151515;
}

.lock {
  margin-left: auto;
}

.layer-scroll {
  display: flex;
  flex-direction: column;
  justify-content: space-between;
  width: 16px;
  padding: 7px 4px;
  background: #efefef;
}

.panel-foot {
  display: flex;
  align-items: center;
  justify-content: flex-end;
  height: 18px;
  border-top: 1px solid #909090;
}

.panel-foot button {
  display: grid;
  place-items: center;
  width: 27px;
  height: 16px;
}

.panel-foot .fx {
  font-size: 14px;
  line-height: 16px;
}

.resize {
  width: 10px;
  height: 10px;
  align-self: flex-end;
  margin-left: 5px;
  background:
    repeating-linear-gradient(90deg, #d6d6d6 0 1px, transparent 1px 2px),
    repeating-linear-gradient(#777 0 1px, #d6d6d6 1px 2px);
  clip-path: polygon(100% 0, 100% 100%, 0 100%);
}

.marker {
  position: absolute;
  left: -18px;
  top: 10px;
  width: 214px;
  height: 42px;
  pointer-events: none;
}

.cursor {
  position: absolute;
  left: 13px;
  top: 4px;
}
```

FILE: rulers.js
```js
const NS = "http://www.w3.org/2000/svg";
const UNIT = 18.9;

function addTick(svg, x1, y1, x2, y2) {
  const line = document.createElementNS(NS, "line");
  line.setAttribute("x1", x1);
  line.setAttribute("y1", y1);
  line.setAttribute("x2", x2);
  line.setAttribute("y2", y2);
  line.setAttribute("stroke", "#000");
  svg.appendChild(line);
}

function addLabel(svg, x, y, value) {
  const text = document.createElementNS(NS, "text");
  text.setAttribute("x", x);
  text.setAttribute("y", y);
  text.textContent = value;
  svg.appendChild(text);
}

// four ticks per label, the label stands at every second unit
function drawRuler(svg, origin, length, vertical) {
  svg.innerHTML = "";
  const first = Math.ceil(-origin / (UNIT / 2));

  for (let i = first; origin + i * UNIT / 2 < length; i++) {
    const pos = Math.floor(origin + i * UNIT / 2) + 0.5;
    const size = i % 4 == 0 ? 15 : i % 2 == 0 ? 6 : 4;

    if (vertical) {
      addTick(svg, 15 - size, pos, 15, pos);
    } else {
      addTick(svg, pos, 15 - size, pos, 15);
    }

    if (i % 4 == 0) {
      const value = String(Math.abs(i / 2));
      if (vertical) {
        [...value].forEach((digit, n) => addLabel(svg, 1, pos + 9 + n * 8, digit));
      } else {
        addLabel(svg, pos + 2, 9, value);
      }
    }
  }
}

function drawRulers() {
  const canvas = document.querySelector(".canvas").getBoundingClientRect();
  const image = document.querySelector(".image").getBoundingClientRect();

  drawRuler(document.getElementById("ruler-h"), image.left - canvas.left, canvas.width, false);
  drawRuler(document.getElementById("ruler-v"), image.top - canvas.top, canvas.height, true);
}

drawRulers();
window.addEventListener("resize", drawRulers);
```
